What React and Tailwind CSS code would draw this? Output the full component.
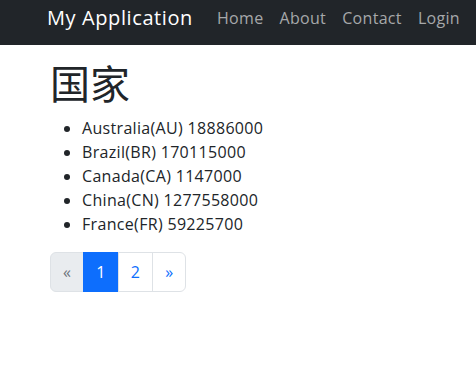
const countries = [
  { name: 'Australia', code: 'AU', population: 18886000 },
  { name: 'Brazil', code: 'BR', population: 170115000 },
  { name: 'Canada', code: 'CA', population: 1147000 },
  { name: 'China', code: 'CN', population: 1277558000 },
  { name: 'France', code: 'FR', population: 59225700 },
];

const font = { fontFamily: '"Open Sans", "Noto Sans CJK SC", sans-serif' };

export default function App() {
  return (
    <div className="min-h-screen bg-white text-[#212529] tracking-[0.02em]" style={font}>
      {/* Navbar */}
      <nav className="h-[45px] bg-[#212529] flex items-center pl-[47px] pb-[9px]">
        <a href="#" className="text-white text-[20px] leading-[30px] mr-4 tracking-[0.03em]">My Application</a>
        <ul className="flex">
          {['Home', 'About', 'Contact', 'Login'].map((item) => (
            <li key={item}>
              <a href="#" className="block px-2 text-[16px] leading-6 text-[#a6a8aa]">{item}</a>
            </li>
          ))}
        </ul>
      </nav>

      <main className="pl-[50px] pt-[15px]">
        <h1 className="text-[40px] leading-[48px] mb-2 tracking-normal">国家</h1>
        <ul className="list-disc pl-8 mb-4 text-[16px] leading-6">
          {countries.map((c) => (
            <li key={c.code}>{c.name}({c.code}) {c.population}</li>
          ))}
        </ul>

        {/* Pagination */}
        <div className="flex mt-4 text-[16px] leading-6">
          <span className="px-3 py-[7px] bg-[#e9ecef] text-[#6c757d] border border-[#dee2e6] rounded-l-md">«</span>
          <span className="px-3 py-[7px] bg-[#0d6efd] text-white border border-[#0d6efd] -ml-px">1</span>
          <a href="#" className="px-3 py-[7px] text-[#0d6efd] border border-[#dee2e6] -ml-px">2</a>
          <a href="#" className="px-3 py-[7px] text-[#0d6efd] border border-[#dee2e6] -ml-px rounded-r-md">»</a>
        </div>
      </main>
    </div>
  );
}
